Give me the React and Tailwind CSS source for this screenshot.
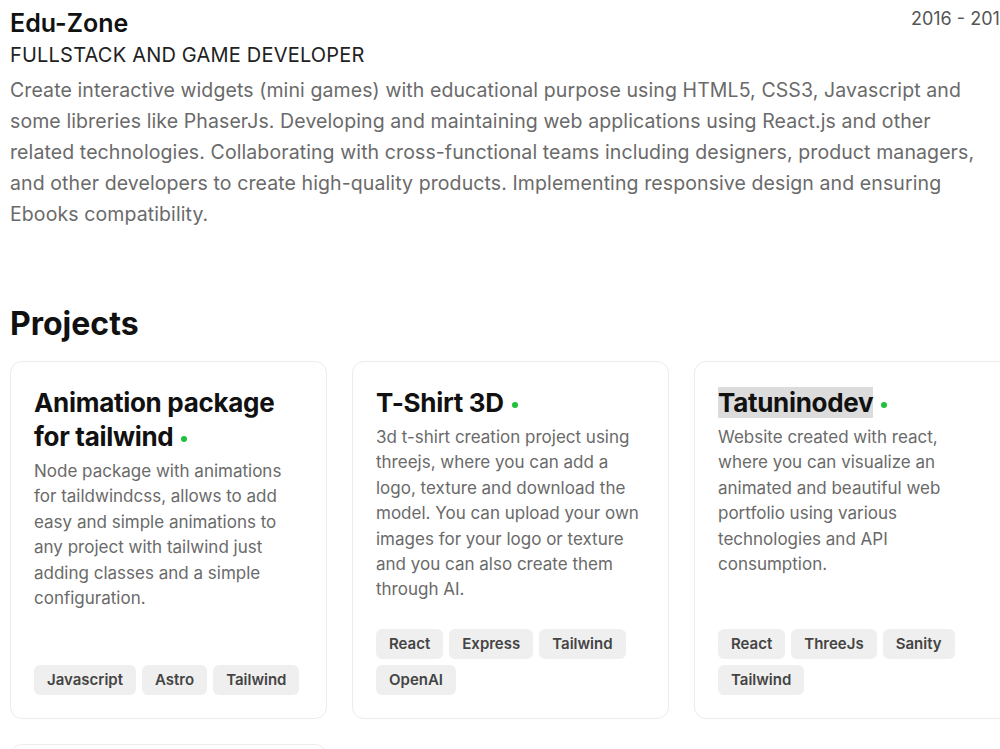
import React from "react";

const projects = [
  {
    title: "Animation package for tailwind",
    description:
      "Node package with animations for taildwindcss, allows to add easy and simple animations to any project with tailwind just adding classes and a simple configuration.",
    tags: ["Javascript", "Astro", "Tailwind"],
  },
  {
    title: "T-Shirt 3D",
    description:
      "3d t-shirt creation project using threejs, where you can add a logo, texture and download the model. You can upload your own images for your logo or texture and you can also create them through AI.",
    tags: ["React", "Express", "Tailwind", "OpenAI"],
  },
  {
    title: "Tatuninodev",
    highlight: true,
    description:
      "Website created with react, where you can visualize an animated and beautiful web portfolio using various technologies and API consumption.",
    tags: ["React", "ThreeJs", "Sanity", "Tailwind"],
  },
];

function ProjectCard({ project }) {
  return (
    <div className="flex flex-col rounded-xl border border-[#ececec] bg-white px-[23px] pt-6 pb-[23px] h-[358px]">
      <h3 className="text-[26px] font-bold leading-[34px] text-[#111] tracking-[-0.3px]">
        <span className={project.highlight ? "bg-[#dcdcdc]" : ""}>
          {project.title}
        </span>
        <span className="ml-2 inline-block h-[6px] w-[6px] rounded-full bg-[#1ec03c] align-middle" />
      </h3>
      <p className="mt-[5px] text-[17px] leading-[25.4px] text-[#6a6a6a]">
        {project.description}
      </p>
      <div className="mt-auto flex flex-wrap gap-[6px]">
        {project.tags.map((tag) => (
          <span
            key={tag}
            className="rounded-md bg-[#efefef] px-[13px] h-[30px] flex items-center text-[15px] font-semibold text-[#444]"
          >
            {tag}
          </span>
        ))}
      </div>
    </div>
  );
}

export default function App() {
  return (
    <div
      className="w-[1000px] h-[749px] overflow-hidden bg-white"
      style={{ fontFamily: "Inter, 'Noto Sans', sans-serif" }}
    >
      <div className="ml-[10px] w-[1001px] pt-[6px]">
        {/* Experience */}
        <div className="flex justify-between items-start">
          <div>
            <h2 className="text-[25px] font-semibold leading-[34px] text-[#111]">
              Edu-Zone
            </h2>
            <p className="mt-[2px] text-[20px] leading-[26px] text-[#222] uppercase tracking-[0.2px]">
              Fullstack and game developer
            </p>
          </div>
          <span className="text-[18px] leading-[26px] text-[#555]">2016 - 2019</span>
        </div>
        <p className="w-[965px] mt-[7px] text-[19.5px] leading-[31px] text-[#6a6a6a] tracking-[0.1px]">
          Create interactive widgets (mini games) with educational purpose using
          HTML5, CSS3, Javascript and some libreries like PhaserJs. Developing
          and maintaining web applications using React.js and other related
          technologies. Collaborating with cross-functional teams including
          designers, product managers, and other developers to create
          high-quality products. Implementing responsive design and ensuring
          Ebooks compatibility.
        </p>

        {/* Projects */}
        <h2 className="mt-[74px] text-[32px] font-bold leading-[40px] text-[#111]">
          Projects
        </h2>
        <div className="mt-[17px] grid grid-cols-3 gap-[25px]">
          {projects.map((p) => (
            <ProjectCard key={p.title} project={p} />
          ))}
          <div className="h-[40px] rounded-xl border border-[#ececec]" />
        </div>
      </div>
    </div>
  );
}
